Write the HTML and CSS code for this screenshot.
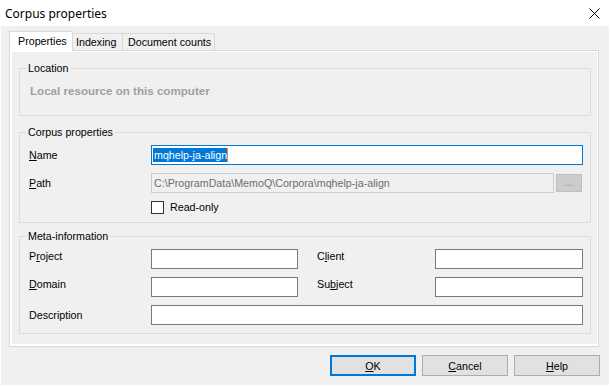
FILE: index.html
```html
<!DOCTYPE html>
<html>
<head>
<meta charset="utf-8">
<title>Corpus properties</title>
<link rel="stylesheet" href="styles.css">
</head>
<body>
<div class="window">
  <div class="titlebar">
    <span class="title">Corpus properties</span>
    <svg class="close" width="11" height="11" viewBox="0 0 11 11"><path d="M0.5 0.5L10.5 10.5M10.5 0.5L0.5 10.5" stroke="#000" stroke-width="1" fill="none"/></svg>
  </div>
  <div class="body">
    <div class="tabstrip">
      <div class="tab selected">Properties</div>
      <div class="tab indexing">Indexing</div>
      <div class="tab counts">Document counts</div>
    </div>
    <div class="page">
      <fieldset class="group loc">
        <legend>Location</legend>
        <div class="disabled-text">Local resource on this computer</div>
      </fieldset>
      <fieldset class="group corpus">
        <legend>Corpus properties</legend>
        <div class="form">
          <label class="lbl"><u>N</u>ame</label>
          <div class="field focus"><span class="sel">mqhelp-ja-align</span><span class="caret"></span></div>
          <label class="lbl"><u>P</u>ath</label>
          <div class="pathrow">
            <div class="field disabled">C:\ProgramData\MemoQ\Corpora\mqhelp-ja-align</div>
            <div class="browse">...</div>
          </div>
          <span></span>
          <div class="check"><span class="box"></span><span>Read-only</span></div>
        </div>
      </fieldset>
      <fieldset class="group meta">
        <legend>Meta-information</legend>
        <div class="metagrid">
          <label class="lbl top">P<u>r</u>oject</label>
          <input class="field" type="text">
          <label class="lbl top lbl2">C<u>l</u>ient</label>
          <input class="field" type="text">
          <label class="lbl top"><u>D</u>omain</label>
          <input class="field" type="text">
          <label class="lbl top lbl2">Su<u>b</u>ject</label>
          <input class="field" type="text">
          <label class="lbl">Description</label>
          <input class="field wide" type="text">
        </div>
      </fieldset>
    </div>
    <div class="buttons">
      <button class="btn default"><u>O</u>K</button>
      <button class="btn"><u>C</u>ancel</button>
      <button class="btn"><u>H</u>elp</button>
    </div>
  </div>
</div>
</body>
</html>
```
FILE: styles.css
```css
* { box-sizing: border-box; }
html, body { margin: 0; padding: 0; }
body {
  background: #f0f0f0;
  font-family: "Liberation Sans", Arial, sans-serif;
  font-size: 10.7px;
  color: #000;
}
u { text-decoration: underline; text-underline-offset: 1px; }
.window {
  width: 610px;
  height: 386px;
  border: 1px solid #fff;
  background: #f0f0f0;
  display: flex;
  flex-direction: column;
}
.titlebar {
  height: 25px;
  flex: none;
  background: #fff;
  display: flex;
  justify-content: space-between;
  padding: 0 9px 0 4px;
}
.title {
  font-family: "Noto Sans", sans-serif;
  font-size: 12px;
  line-height: 25px;
}
.close { margin-top: 7px; }
.body {
  flex: 1;
  display: flex;
  flex-direction: column;
  padding: 5px 9px 9px 8px;
}
.tabstrip {
  display: flex;
  align-items: flex-end;
  height: 19px;
}
.tab {
  height: 17px;
  border: 1px solid #d9d9d9;
  border-left: 0;
  border-bottom: 0;
  background: #f0f0f0;
  line-height: 16px;
  white-space: nowrap;
}
.tab.selected {
  width: 64px;
  height: 20px;
  border-left: 1px solid #d9d9d9;
  background: #fff;
  line-height: 19px;
  padding-left: 8px;
  margin-bottom: -1px;
  position: relative;
  z-index: 1;
}
.tab.indexing { width: 50px; padding-left: 3px; }
.tab.counts { width: 92px; padding-left: 5px; }
.page {
  height: 297px;
  margin-right: 1px;
  border: 1px solid #d9d9d9;
  background: #f0f0f0;
  box-shadow: inset 2px 0 #fff, inset 0 -2px #fff, inset -1px 0 #fff, inset 0 1px #fff;
  padding: 11px 7px 0 9px;
}
.group {
  margin: 0;
  border: 1px solid #dcdcdc;
  padding: 6px 7px 8px 9px;
  min-width: 0;
}
.group legend {
  padding: 0 2px;
  margin-left: -3px;
  line-height: 13px;
  height: 13px;
}
.group.loc { padding-top: 9px; padding-bottom: 18px; }
.group.corpus { margin-top: 10px; }
.group.meta { margin-top: 7px; }
.disabled-text {
  font-weight: bold;
  font-size: 11.6px;
  color: #a0a0a0;
  line-height: 13px;
  padding-left: 1px;
}
.form {
  display: grid;
  grid-template-columns: 122px 1fr;
  grid-template-rows: 20px 20px 13px;
  row-gap: 8px;
}
.metagrid {
  display: grid;
  grid-template-columns: 122px 147px 137px 1fr;
  grid-auto-rows: 20px;
  row-gap: 8px;
}
.lbl {
  align-self: center;
  line-height: 13px;
  white-space: nowrap;
}
.lbl.top { align-self: start; margin-top: 1px; }
.lbl2 { padding-left: 19px; }
.field {
  height: 20px;
  width: 100%;
  margin: 0;
  border: 1px solid #7a7a7a;
  background: #fff;
  padding: 0 2px;
  font: inherit;
  color: #000;
  outline: none;
  white-space: nowrap;
  overflow: hidden;
  display: flex;
  align-items: center;
}
.field.wide { grid-column: 2 / 5; }
.field.focus { border-color: #0078d7; padding-left: 1px; }
.sel {
  background: #0078d7;
  color: #fff;
  line-height: 14px;
  padding-left: 1px;
}
.caret {
  width: 1px;
  height: 14px;
  background: #f78828;
}
.pathrow { display: flex; }
.field.disabled {
  flex: 1;
  width: auto;
  border-color: #cccccc;
  background: #f0f0f0;
  color: #6d6d6d;
}
.browse {
  width: 26px;
  height: 18px;
  margin: 1px 1px 0 2px;
  background: #cccccc;
  border: 1px solid #bfbfbf;
  color: #8a8a8a;
  font-size: 10px;
  line-height: 1;
  display: flex;
  justify-content: center;
  align-items: flex-end;
  padding-bottom: 3px;
}
.check {
  display: flex;
  align-items: center;
  gap: 6px;
  line-height: 13px;
}
.box {
  width: 13px;
  height: 13px;
  border: 1px solid #333;
  background: #fff;
}
.buttons {
  display: flex;
  justify-content: flex-end;
  gap: 6px;
  margin-top: 8px;
}
.btn {
  width: 86px;
  height: 21px;
  margin: 0;
  padding: 0;
  border: 1px solid #adadad;
  background: #e1e1e1;
  font: inherit;
  color: #000;
  display: flex;
  align-items: center;
  justify-content: center;
}
.btn.default { border: 2px solid #0078d7; }
```
